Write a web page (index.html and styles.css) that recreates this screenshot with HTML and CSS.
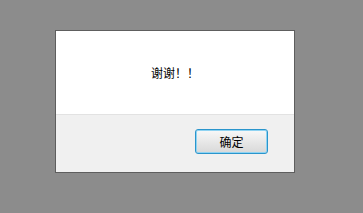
FILE: index.html
```html
<!DOCTYPE html>
<html lang="zh">
<head>
    <meta charset="UTF-8">
    <title>提示</title>
    <link rel="stylesheet" href="styles.css">
</head>
<body>
    <div class="dialog">
        <div class="dialog-body">谢谢！！</div>
        <div class="dialog-footer">
            <button class="btn-ok">确定</button>
        </div>
    </div>
</body>
</html>
```

FILE: styles.css
```css
body {
    margin: 0;
    padding: 30px 0 0 55px;
    height: 213px;
    box-sizing: border-box;
    background: #8c8c8c;
    font-family: "Liberation Sans", "Noto Sans CJK SC", sans-serif;
}
.dialog {
    width: 238px;
    border: 1px solid #5e5e5e;
    background: #fff;
}
.dialog-body {
    height: 83px;
    display: flex;
    justify-content: center;
    align-items: center;
    font-size: 12px;
    color: #000;
}
.dialog-footer {
    height: 58px;
    box-sizing: border-box;
    border-top: 1px solid #e2e2e2;
    background: #f0f0f0;
    padding: 14px 26px 0 0;
    display: flex;
    justify-content: flex-end;
    align-items: flex-start;
}
.btn-ok {
    width: 73px;
    height: 25px;
    padding: 0;
    border: 1px solid #2a95cc;
    border-radius: 3px;
    background: linear-gradient(#f8f8f8, #d8d8d8);
    box-shadow: inset 0 0 0 1px #8fd3f2;
    font-family: "Liberation Sans", "Noto Sans CJK SC", sans-serif;
    font-size: 12px;
    color: #000;
    cursor: pointer;
}
```
